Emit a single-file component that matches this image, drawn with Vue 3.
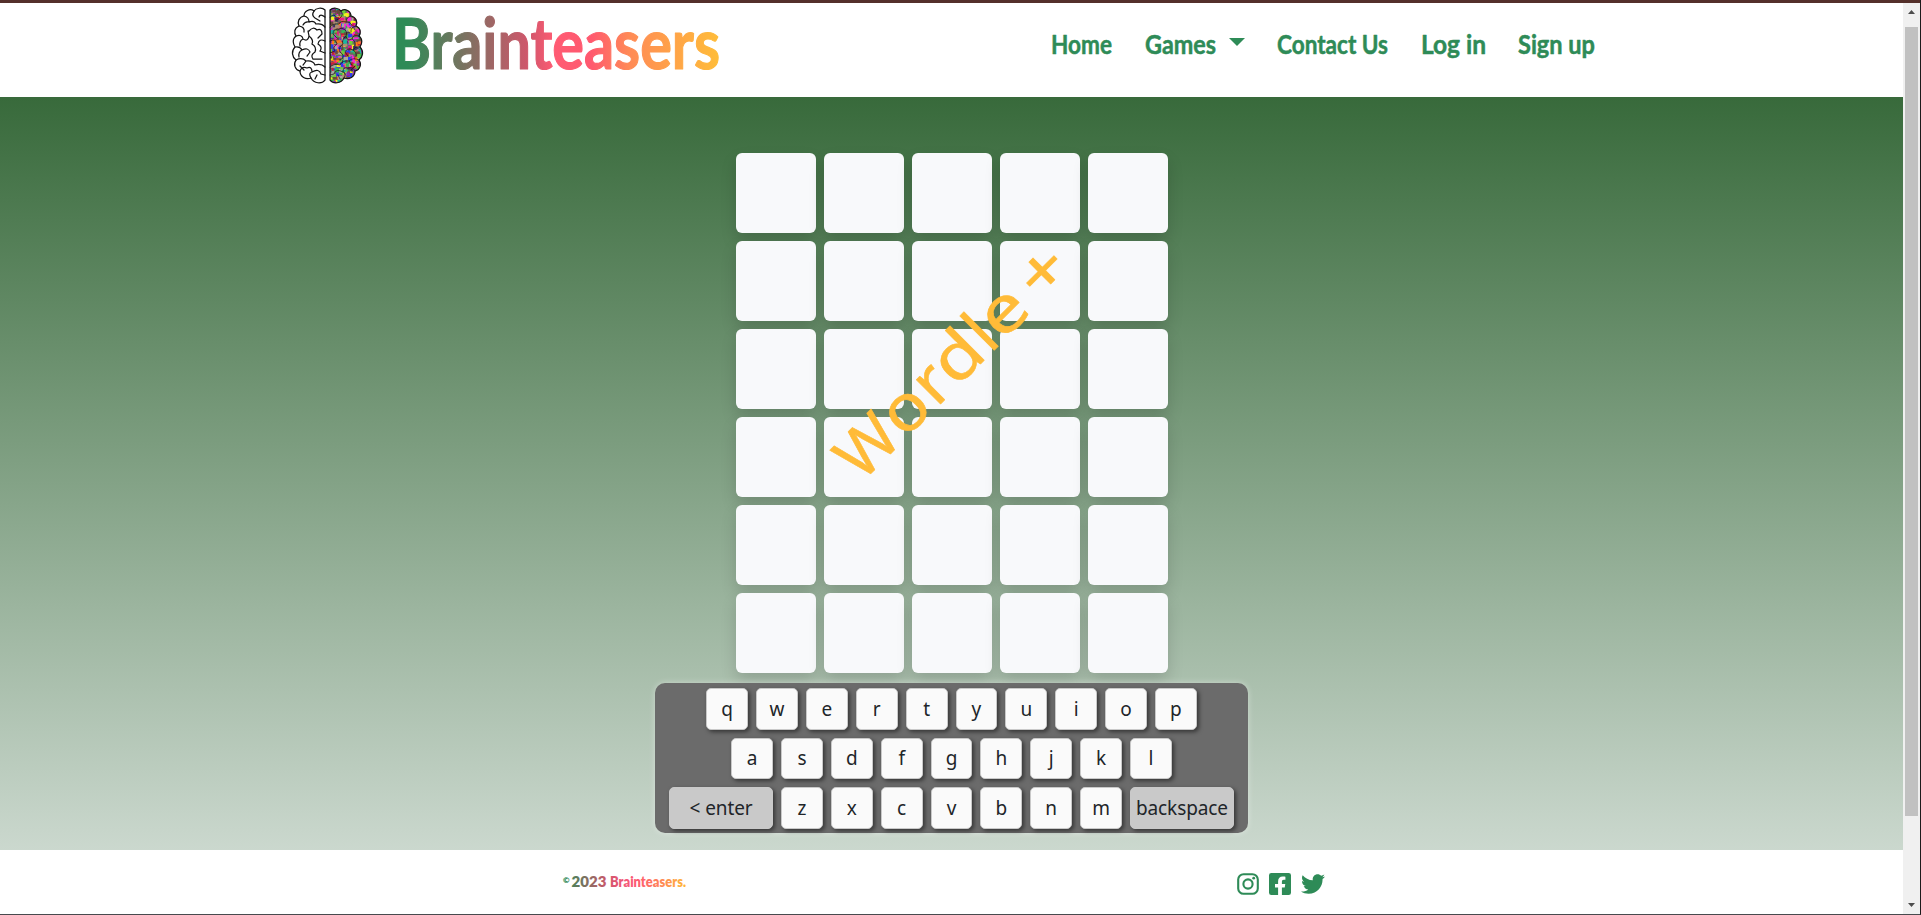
<script setup>
const links = [
  { text: 'Home', w: 61 },
  { text: 'Games', w: 71, caret: true },
  { text: 'Contact Us', w: 111 },
  { text: 'Log in', w: 65 },
  { text: 'Sign up', w: 77 },
]
const rows = [
  [...'qwertyuiop'],
  [...'asdfghjkl'],
  ['< enter', ...'zxcvbnm', 'backspace'],
]
const title = [
  { c: 'W', x: -1, w: 60 },
  { c: 'o', x: 60, w: 43 },
  { c: 'r', x: 105, w: 28 },
  { c: 'd', x: 133, w: 46 },
  { c: 'l', x: 181, w: 17 },
  { c: 'e', x: 198, w: 44 },
  { c: '+', x: 253, w: 47 },
]

const palette = ['#f01888', '#35b853', '#6b4a3d', '#8b2fc0', '#ff7a1a', '#2b3ff0', '#a8a8a0', '#f4f020', '#19b7a0', '#c11f3a', '#6fcf3a', '#403060', '#ff22dd', '#b08a70']
let seed = 17
const rand = () => {
  seed = (seed * 16807) % 2147483647
  return seed / 2147483647
}
const specks = Array.from({ length: 620 }, () => ({
  x: (36 + rand() * 36).toFixed(1),
  y: (rand() * 78).toFixed(1),
  w: (1.5 + rand() * 3.2).toFixed(1),
  h: (1.5 + rand() * 3.2).toFixed(1),
  fill: palette[Math.floor(rand() * palette.length)],
}))
</script>

<template>
  <div class="screen">
    <div class="top-strip"></div>
    <div class="viewport">
      <div class="page">
        <header>
          <a class="brand">
            <svg class="brain" width="72" height="78" viewBox="0 0 72 78">
              <defs>
                <path id="half" d="M34 3C31 0 25 1 23 4C19 1 13 4 13 9C8 10 6 15 8 19C3 21 3 26 5 29C1 32 2 37 4 40C0 44 1 50 5 53C2 57 4 63 9 64C9 70 15 73 20 71C23 77 31 77 34 73Z" />
                <path id="folds" d="M23 4Q20 8 24 11L29 14M34 10Q29 6 28 10M13 9Q18 10 18 15Q14 14 12 18M8 19Q14 20 13 25M18 15Q23 13 25 17Q31 16 34 20M18 24Q22 19 26 23Q31 21 31 27L27 31M5 29Q11 27 12 32Q8 34 9 39M12 32Q17 35 18 29L17 24M18 29Q23 33 21 37Q26 40 24 45M4 40Q9 39 11 43Q7 45 8 50M34 34Q28 31 27 37Q32 40 29 44L34 46M11 43Q17 40 19 45L16 49M5 53Q11 50 15 54L12 58M24 45Q19 48 22 52L31 52M15 54Q22 53 24 58Q30 56 34 60M9 64Q11 59 16 61Q21 59 21 65M20 71Q17 66 21 65Q28 61 30 67L34 68M9 59L13 63M26 68L24 72" />
                <clipPath id="rightHalf"><use href="#half" transform="translate(73 0) scale(-1 1)" /></clipPath>
              </defs>
              <use href="#half" class="line" />
              <use href="#folds" class="line" />
              <g clip-path="url(#rightHalf)">
                <rect x="36" width="36" height="78" fill="#657059" />
                <rect v-for="(s, i) in specks" :key="i" :x="s.x" :y="s.y" :width="s.w" :height="s.h" :fill="s.fill" />
              </g>
              <g transform="translate(73 0) scale(-1 1)">
                <use href="#half" class="line" />
                <use href="#folds" class="line faint" />
              </g>
            </svg>
            <svg class="logo" width="328" height="72" viewBox="0 0 328 72">
              <defs>
                <linearGradient id="brandFade" gradientUnits="userSpaceOnUse" x1="0" y1="0" x2="328" y2="0">
                  <stop offset=".04" stop-color="#2e8b57" />
                  <stop offset=".41" stop-color="#d0566b" />
                  <stop offset=".49" stop-color="#ff5b73" />
                  <stop offset=".6" stop-color="#ff596f" />
                  <stop offset=".72" stop-color="#ff8b56" />
                  <stop offset="1" stop-color="#ffbe38" />
                </linearGradient>
              </defs>
              <text x="-2" y="61.5" textLength="328" lengthAdjust="spacingAndGlyphs" fill="url(#brandFade)" stroke="url(#brandFade)">Brainteasers</text>
            </svg>
          </a>
          <nav>
            <a v-for="l in links" :key="l.text">
              <svg :width="l.w" height="36"><text x="0" y="27" :textLength="l.w" lengthAdjust="spacingAndGlyphs">{{ l.text }}</text></svg>
              <i v-if="l.caret" class="caret"></i>
            </a>
          </nav>
        </header>

        <main>
          <div class="board">
            <div v-for="n in 30" :key="n" class="cell"></div>
            <svg class="title" width="432" height="520" viewBox="736 153 432 520">
              <g transform="translate(862.3 482.3) rotate(-45)">
                <text v-for="t in title" :key="t.c" :x="t.x" y="0" :textLength="t.w" lengthAdjust="spacingAndGlyphs">{{ t.c }}</text>
              </g>
            </svg>
          </div>
          <div class="keyboard">
            <div v-for="(row, i) in rows" :key="i" class="row">
              <button v-for="k in row" :key="k" :class="{ wide: k.length > 1 }">{{ k }}</button>
            </div>
          </div>
        </main>

        <footer>
          <svg class="copy" width="126" height="24" viewBox="0 0 126 24">
            <defs>
              <linearGradient id="copyFade" gradientUnits="userSpaceOnUse" x1="0" y1="0" x2="126" y2="0">
                <stop offset="0" stop-color="#2e8b57" />
                <stop offset=".36" stop-color="#d0566b" />
                <stop offset=".48" stop-color="#f0587a" />
                <stop offset=".6" stop-color="#ff5b70" />
                <stop offset="1" stop-color="#ffbe38" />
              </linearGradient>
            </defs>
            <g fill="url(#copyFade)">
              <text class="mark" x="0" y="14" textLength="6">©</text>
              <text x="8.5" y="17.5" textLength="35" lengthAdjust="spacingAndGlyphs">2023</text>
              <text x="47" y="17.5" textLength="76" lengthAdjust="spacingAndGlyphs">Brainteasers.</text>
            </g>
          </svg>
          <div class="social">
            <svg width="22" height="22" viewBox="0 0 22 22">
              <rect x="1.2" y="1.2" width="19.6" height="19.6" rx="5.4" fill="none" stroke="#2e8b57" stroke-width="2.1" />
              <circle cx="11" cy="11" r="4.6" fill="none" stroke="#2e8b57" stroke-width="2.1" />
              <circle cx="16.7" cy="5.2" r="1.4" fill="#2e8b57" />
            </svg>
            <svg width="22" height="22" viewBox="0 32 448 448">
              <path fill="#2e8b57" d="M400 32H48A48 48 0 0 0 0 80v352a48 48 0 0 0 48 48h137.25V327.69h-63V256h63v-54.64c0-62.15 37-96.48 93.67-96.48 27.14 0 55.52 4.84 55.52 4.84v61h-31.27c-30.81 0-40.42 19.12-40.42 38.73V256h68.78l-11 71.69h-57.78V480H400a48 48 0 0 0 48-48V80a48 48 0 0 0-48-48z" />
            </svg>
            <svg width="24" height="24" viewBox="0 0 512 512">
              <path fill="#2e8b57" d="M459.37 151.716c.325 4.548.325 9.097.325 13.645 0 138.72-105.583 298.558-298.558 298.558-59.452 0-114.68-17.219-161.137-47.106 8.447.974 16.568 1.299 25.34 1.299 49.055 0 94.213-16.568 130.274-44.832-46.132-.975-84.792-31.188-98.112-72.772 6.498.974 12.995 1.624 19.818 1.624 9.421 0 18.843-1.3 27.614-3.573-48.081-9.747-84.143-51.98-84.143-102.985v-1.299c13.969 7.797 30.214 12.67 47.431 13.319-28.264-18.843-46.781-51.005-46.781-87.391 0-19.492 5.197-37.36 14.294-52.954 51.655 63.675 129.3 105.258 216.365 109.807-1.624-7.797-2.599-15.918-2.599-24.04 0-57.828 46.782-104.934 104.934-104.934 30.213 0 57.502 12.67 76.67 33.137 23.715-4.548 46.456-13.32 66.599-25.34-7.798 24.366-24.366 44.833-46.132 57.827 21.117-2.273 41.584-8.122 60.426-16.243-14.292 20.791-32.161 39.308-52.628 54.253z" />
            </svg>
          </div>
        </footer>
      </div>
      <aside class="scrollbar">
        <svg width="7" height="5" viewBox="0 0 7 5"><path d="M0 4L3.5 0L7 4Z" /></svg>
        <div class="thumb"></div>
        <svg width="7" height="5" viewBox="0 0 7 5"><path d="M0 0H7L3.5 4Z" /></svg>
      </aside>
    </div>
  </div>
</template>

<style>
body { overflow: hidden; }
</style>

<style scoped>
.screen { box-sizing: border-box; width: 1921px; height: 915px; display: flex; flex-direction: column; border-right: 1px solid #1b1b1b; border-bottom: 1px solid #484a4e; background: #fff; }
.top-strip { height: 3px; background: #54302b; }
.viewport { flex: 1; display: flex; min-height: 0; }
.page { width: 1903px; display: flex; flex-direction: column; }
svg { display: block; overflow: visible; }
header { height: 94px; box-sizing: border-box; display: flex; justify-content: space-between; padding: 4px 308px 0 291px; }
.brand { display: flex; gap: 31px; }
.line { fill: none; stroke: #151515; stroke-width: 1.25; stroke-linecap: round; }
.faint { stroke-width: .7; }
.logo text { font: 700 70px Lato, sans-serif; stroke-width: 1.2; stroke-linejoin: round; }
nav { display: flex; gap: 32.5px; padding-top: 20px; }
nav a { display: flex; gap: 13px; }
nav text { font: 700 27px Lato, sans-serif; fill: #2e8b57; stroke: #2e8b57; stroke-width: .5; stroke-linejoin: round; }
.caret { margin-top: 11px; width: 0; height: 0; border: 8px solid transparent; border-top-color: #2e8b57; border-bottom: 0; }
main { height: 753px; box-sizing: border-box; padding-top: 56px; display: flex; flex-direction: column; align-items: center; gap: 10px; background: linear-gradient(#386a3b, #cbd8ce); }
.board { position: relative; display: grid; grid-template-columns: repeat(5, 80px); grid-auto-rows: 80px; gap: 8px; }
.cell { background: #f8f9fb; border-radius: 6px; box-shadow: 0 8px 16px rgba(0, 0, 0, .15); }
.title { position: absolute; left: 0; top: 0; }
.title text { font: 400 64px "Noto Sans", sans-serif; fill: #ffbb38; stroke: #ffbb38; stroke-width: .6; stroke-linejoin: round; }
.keyboard { width: 593px; height: 150px; box-sizing: border-box; padding-top: 5px; border-radius: 10px; background: #6b6b6b; box-shadow: 0 0 6px rgba(255, 255, 255, .4); display: flex; flex-direction: column; gap: 8px; z-index: 1; }
.row { display: flex; justify-content: center; gap: 8px; }
button { width: 41.85px; height: 41.5px; box-sizing: border-box; padding: 1px 0 0; border: 1px solid #c9c9c9; border-radius: 5px; background: #fafafa; color: #212529; font: 19px/1 "Noto Sans", sans-serif; white-space: nowrap; box-shadow: 2px 2px 4px rgba(0, 0, 0, .5); }
.wide { width: 104px; background: #c9c9c9; letter-spacing: -.1px; }
footer { flex: 1; box-sizing: border-box; display: flex; justify-content: space-between; align-items: flex-start; padding: 19px 578.5px 0 563px; }
.copy text { font: 800 15px Lato, sans-serif; }
.copy .mark { font-size: 8px; }
.social { display: flex; align-items: center; gap: 10px; padding-top: 3px; }
.scrollbar { width: 17px; background: #f0f0f0; display: flex; flex-direction: column; align-items: center; box-sizing: border-box; padding: 7px 0 6px; fill: #4d4d4d; }
.thumb { width: 13px; height: 789px; margin: 12px 0 auto; background: #c1c1c1; }
</style>
